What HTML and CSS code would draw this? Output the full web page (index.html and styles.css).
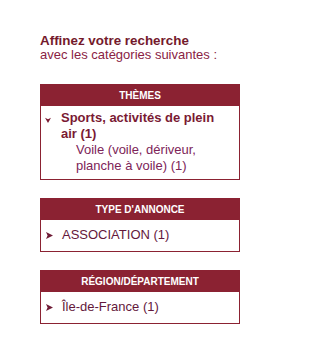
FILE: index.html
```html
<!DOCTYPE html>
<html lang="fr">
<head>
<meta charset="utf-8">
<title>Affinez votre recherche</title>
<link rel="stylesheet" href="styles.css">
</head>
<body>
<div class="wrap">
  <div class="intro">
    <div class="title">Affinez votre recherche</div>
    <div class="subtitle">avec les catégories suivantes :</div>
  </div>

  <div class="box">
    <div class="box-head">THÈMES</div>
    <ul class="box-body themes">
      <li class="item open">
        <svg class="arrow" width="7" height="7" viewBox="0 0 7 7"><path d="M0 1 L3.5 2.6 L7 1 L3.5 7 Z" fill="#7a1a33"/></svg>
        <div class="item-text">
          <span class="main">Sports, activités de plein air (1)</span>
          <ul class="sub">
            <li>Voile (voile, dériveur, planche à voile) (1)</li>
          </ul>
        </div>
      </li>
    </ul>
  </div>

  <div class="box">
    <div class="box-head">TYPE D'ANNONCE</div>
    <ul class="box-body">
      <li class="item">
        <svg class="arrow" width="7" height="7" viewBox="0 0 7 7"><path d="M0 0 L7 3.5 L0 7 L1.6 3.5 Z" fill="#6e1a35"/></svg>
        <div class="item-text">ASSOCIATION (1)</div>
      </li>
    </ul>
  </div>

  <div class="box">
    <div class="box-head">RÉGION/DÉPARTEMENT</div>
    <ul class="box-body">
      <li class="item">
        <svg class="arrow" width="7" height="7" viewBox="0 0 7 7"><path d="M0 0 L7 3.5 L0 7 L1.6 3.5 Z" fill="#6e1a35"/></svg>
        <div class="item-text">Île-de-France (1)</div>
      </li>
    </ul>
  </div>
</div>
</body>
</html>
```
FILE: styles.css
```css
html, body {
  margin: 0;
  padding: 0;
  background: #ffffff;
}

body {
  font-family: "Liberation Sans", Arial, sans-serif;
  font-size: 13px;
}

.wrap {
  padding: 34px 0 0 40px;
  width: 200px;
}

.intro {
  line-height: 14px;
  margin-bottom: 22px;
}

.title {
  font-weight: bold;
  font-size: 13.4px;
  color: #741a2c;
}

.subtitle {
  color: #8a2244;
}

.box {
  border: 1px solid #8b2232;
  margin-bottom: 18px;
}

.box-head {
  background: #8b2232;
  color: #ffffff;
  font-weight: bold;
  font-size: 10px;
  height: 21px;
  line-height: 21px;
  text-align: center;
}

.box-body {
  list-style: none;
  margin: 0;
  padding: 7px 0 8px 5px;
  line-height: 16px;
}

.box-body.themes {
  padding: 4px 0 5px 4px;
}

.item {
  display: flex;
  align-items: flex-start;
  gap: 9px;
  color: #64183c;
}

.item .arrow {
  flex: none;
  margin-top: 5px;
}

.item.open .arrow {
  margin-top: 7px;
  width: 6px;
  height: 6px;
  margin-right: 1px;
}

.item-text {
  flex: 1;
}

.main {
  font-weight: bold;
  color: #7a1a33;
  display: block;
  padding-right: 8px;
}

.sub {
  list-style: none;
  margin: 0;
  padding: 0 20px 0 15px;
}

.sub li {
  color: #7d2458;
}
```
